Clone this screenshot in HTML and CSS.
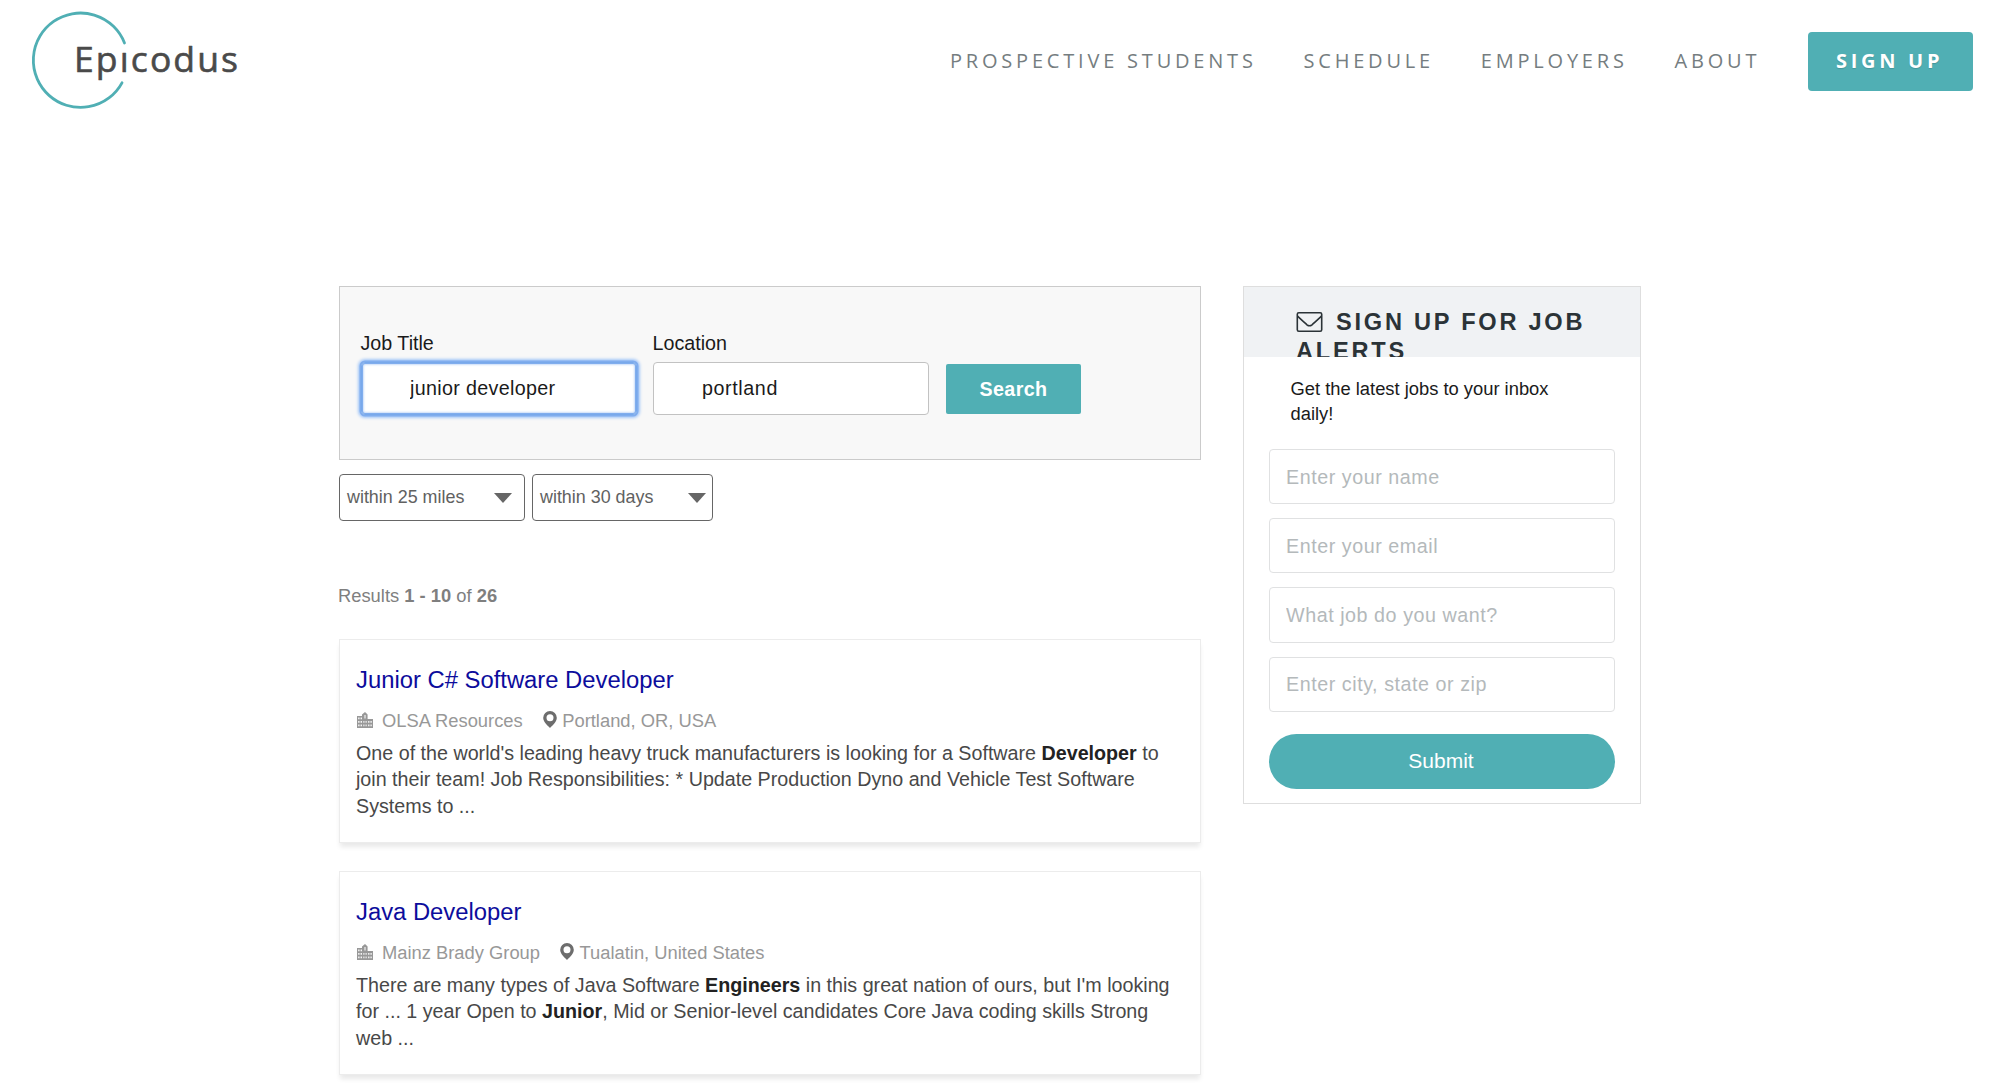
FILE: index.html
```
<!DOCTYPE html>
<html lang="en">
<head>
<meta charset="utf-8">
<title>Epicodus Jobs</title>
<link rel="stylesheet" href="styles.css">
</head>
<body>
<svg class="sprite" width="0" height="0">
  <symbol id="building" viewBox="0 0 16 16">
    <path fill="currentColor" d="M0 4h5V2.400L8 0l2.600 2.400V7H16v9H0z"/>
    <path fill="#fff" d="M1.200 5.600h1.300v1.700H1.200zM3.600 5.600h1.300v1.700H3.600zM1.200 9h1.300v1.700H1.200zM3.600 9h1.300v1.700H3.600zM1.200 12.500h1.300v1.700H1.200zM3.600 12.500h1.300v1.700H3.600zM7.500 3h1v3.500h-1zM6.400 9h1v1.700h-1zM8.600 9h1v1.700h-1zM6.400 12.500h1v1.700h-1zM8.600 12.500h1v1.700h-1zM11.200 9h1.200v1.700h-1.200zM13.500 9h1.200v1.700h-1.200zM11.200 12.500h1.200v1.700h-1.200zM13.500 12.500h1.200v1.700h-1.200z"/>
  </symbol>
  <symbol id="pin" viewBox="0 0 14 17">
    <path fill="currentColor" fill-rule="evenodd" d="M7 0a6.800 6.800 0 0 1 6.800 6.800C13.800 10.800 10 14 7 17 4 14 .2 10.800.2 6.800A6.800 6.800 0 0 1 7 0zm0 3.200a3.500 3.500 0 1 0 0 7 3.500 3.500 0 0 0 0-7z"/>
  </symbol>
</svg>

<header class="header">
  <a class="logo" aria-label="Epicodus">
    <svg width="215" height="104" viewBox="0 0 215 104">
      <path d="M93.500 34A47.200 47.200 0 1 0 91 73.800" fill="none" stroke="#50afb4" stroke-width="2.800" stroke-linecap="round"/>
      <text class="wordmark" x="43" y="62.700" textLength="164">Epıcodus</text>
    </svg>
  </a>
  <nav class="nav">
    <a>PROSPECTIVE STUDENTS</a>
    <a>SCHEDULE</a>
    <a>EMPLOYERS</a>
    <a>ABOUT</a>
    <a class="signup">SIGN UP</a>
  </nav>
</header>

<main class="main">
  <section class="jobs">
    <form class="search">
      <label class="field">Job Title<input class="box focused" value="junior developer"></label>
      <label class="field">Location<input class="box loc" value="portland"></label>
      <button class="go" type="button">Search</button>
    </form>
    <div class="filters">
      <div class="select miles">within 25 miles<i class="caret"></i></div>
      <div class="select days">within 30 days<i class="caret"></i></div>
    </div>
    <p class="count">Results <b>1 - 10</b> of <b>26</b></p>

    <article class="card">
      <h2 class="title">Junior C# Software Developer</h2>
      <div class="meta"><svg class="bld"><use href="#building"/></svg><span>OLSA Resources</span><svg class="pin"><use href="#pin"/></svg><span>Portland, OR, USA</span></div>
      <p class="desc">One of the world's leading heavy truck manufacturers is looking for a Software <b>Developer</b> to<br>join their team! Job Responsibilities: * Update Production Dyno and Vehicle Test Software<br>Systems to ...</p>
    </article>
    <article class="card">
      <h2 class="title">Java Developer</h2>
      <div class="meta"><svg class="bld"><use href="#building"/></svg><span>Mainz Brady Group</span><svg class="pin"><use href="#pin"/></svg><span>Tualatin, United States</span></div>
      <p class="desc">There are many types of Java Software <b>Engineers</b> in this great nation of ours, but I'm looking<br>for ... 1 year Open to <b>Junior</b>, Mid or Senior-level candidates Core Java coding skills Strong<br>web ...</p>
    </article>
  </section>

  <aside class="alerts">
    <h3 class="alerts-head"><svg class="mail" viewBox="0 0 26 20" fill="none" stroke="currentColor" stroke-width="1.600"><rect x=".8" y=".8" width="24.400" height="18.400" rx="1.500"/><path d="M1 4.200C5 8 8 10.500 10.500 12.800q2.500 2 5 0C18 10.500 21 8 25 4.200"/></svg>SIGN UP FOR JOB<br>ALERTS</h3>
    <p class="lead">Get the latest jobs to your inbox<br>daily!</p>
    <form class="form">
      <input placeholder="Enter your name">
      <input placeholder="Enter your email">
      <input placeholder="What job do you want?">
      <input placeholder="Enter city, state or zip">
      <button class="submit" type="button">Submit</button>
    </form>
  </aside>
</main>
</body>
</html>
```
FILE: styles.css
```
* { box-sizing: border-box; }
body { margin: 0; height: 1090px; overflow: hidden; background: #fff; color: #1a1a1a; font-family: "Liberation Sans", Arial, sans-serif; font-size: 19.7px; }
h2, h3, p { margin: 0; }
.sprite { display: block; }

.header { display: flex; justify-content: space-between; align-items: center; height: 125px; padding: 0 26px 0 31px; }
.logo { display: block; height: 104px; margin-bottom: 4px; }
.logo svg { display: block; }
.wordmark { font: 35.500px "Open Sans", sans-serif; fill: #4a4a4a; stroke: #4a4a4a; stroke-width: .6px; stroke-linejoin: round; }
.nav { display: flex; align-items: center; gap: 46.800px; margin-bottom: 2px; font-family: "Open Sans", sans-serif; font-size: 20px; line-height: 28px; letter-spacing: 3.800px; color: #757d80; }
.nav a { padding-bottom: 2px; }
.nav .signup { width: 165px; height: 59px; line-height: 57px; margin-left: 1px; padding: 0 0 0 28px; letter-spacing: 3.700px; border-radius: 4px; background: #50afb4; color: #fff; font-weight: 700; text-shadow: 0 1px 1px rgba(0,0,0,.15); }

.main { display: flex; align-items: flex-start; gap: 42px; padding: 161px 0 0 339px; }
.jobs { width: 862px; }
.search { display: flex; align-items: flex-end; height: 174px; padding: 0 0 44px 20.500px; border: 1px solid #cbcbcb; background: #f8f8f8; }
.field { display: flex; flex-direction: column; gap: 6px; width: 276px; margin-right: 16px; line-height: 26px; }
.box { height: 53px; padding: 0 48.500px; border: 1px solid #c2c2c2; border-radius: 4px; background: #fff; font: inherit; color: #1a1a1a; letter-spacing: .33px; outline: 0; }
.loc { letter-spacing: .6px; }
.focused { border-color: #78a9ea; box-shadow: 0 0 0 1.500px #80adee, 0 0 3px 3px #a5c8f8, inset 0 0 0 1px #80adee, inset 0 0 2px 2px #c9def9; }
.go { width: 135px; height: 50px; margin: 0 0 1px 1px; padding: 0 0 0 1px; border: 0; border-radius: 2px; background: #50afb4; color: #fff; font: bold 19.700px "Liberation Sans", sans-serif; letter-spacing: .4px; }

.filters { display: flex; gap: 7px; margin-top: 14px; }
.select { display: flex; align-items: center; justify-content: space-between; height: 47px; padding: 0 12px 0 7px; border: 1px solid #666; border-radius: 4px; font-size: 17.900px; color: #616161; }
.miles { width: 186px; }
.days { width: 181px; padding-right: 6px; }
.caret { margin-top: 1px; border: 9.500px solid transparent; border-top: 10px solid #666; border-bottom: 0; }

.count { margin: 62px 0 0 -1px; height: 56px; line-height: 26px; font-size: 18.350px; color: #7f7f7f; }
.card { height: 204px; margin-bottom: 28px; padding: 24px 16px 0; border: 1px solid #ececec; background: #fff; box-shadow: 0 5px 5px -1px rgba(0,0,0,.09); }
.title { height: 43px; line-height: 31px; font-size: 23.820px; font-weight: 400; color: #0c0c9c; }
.meta { display: flex; align-items: center; height: 28px; margin-bottom: 5px; font-size: 18.350px; color: #989898; }
.bld { width: 16px; height: 16px; margin: 0 9px 3px 1px; }
.pin { width: 14px; height: 17px; margin: 0 5.500px 4px 20px; color: #6d6d6d; }
.desc { line-height: 26.250px; font-size: 19.700px; color: #484848; white-space: nowrap; }
.desc b { color: #222; }

.alerts { width: 398px; height: 518px; border: 1px solid #dedede; background: #fff; }
.alerts-head { height: 70px; padding: 21px 0 0 52px; overflow: hidden; background: #f0f2f4; color: #2b3337; font-size: 23.600px; line-height: 29.300px; letter-spacing: 2.750px; white-space: nowrap; }
.mail { width: 27px; height: 20px; margin-right: 13px; vertical-align: -2px; }
.lead { height: 92px; padding: 18.500px 0 0 46.500px; font-size: 18.350px; line-height: 25px; }
.form { display: flex; flex-direction: column; gap: 14px; width: 346px; margin-left: 25px; }
.form input { height: 55.200px; padding: 1.500px 0 0 16px; border: 1.500px solid #e0e1e2; border-radius: 4px; font: 19.700px "Liberation Sans", sans-serif; letter-spacing: .55px; }
.form input::placeholder { color: #b4b9bb; opacity: 1; }
.submit { height: 55px; margin-top: 8px; padding: 0 2px 0 0; border: 0; border-radius: 28px; background: #50afb4; color: #fff; font: 21px "Liberation Sans", sans-serif; }
```
